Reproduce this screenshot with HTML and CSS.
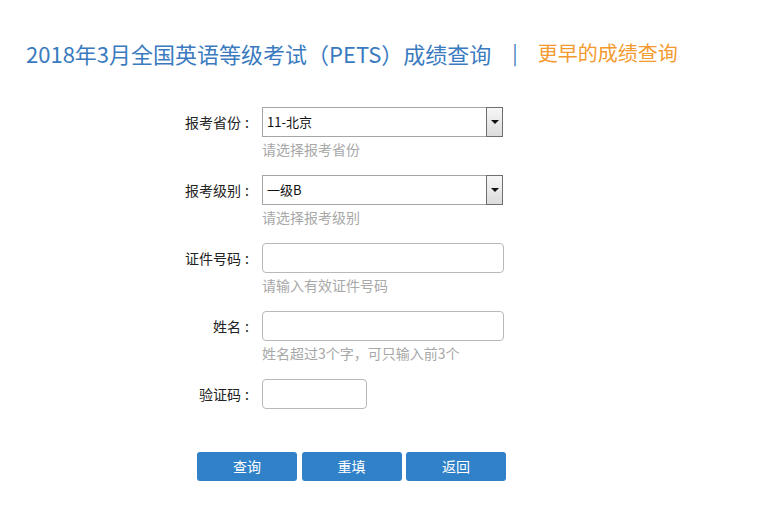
FILE: index.html
```html
<!DOCTYPE html>
<html lang="zh-CN">
<head>
<meta charset="utf-8">
<title>PETS成绩查询</title>
<link rel="stylesheet" href="styles.css">
</head>
<body>
<div class="header">
  <span class="title">2018年3月全国英语等级考试（PETS）成绩查询</span>
  <span class="sep">|</span>
  <a class="earlier">更早的成绩查询</a>
</div>
<div class="form">
  <div class="row">
    <label class="label">报考省份<span class="colon">:</span></label>
    <div class="field">
      <div class="select"><span class="value">11-北京</span><span class="arrow"><span class="tri"></span></span></div>
      <div class="hint">请选择报考省份</div>
    </div>
  </div>
  <div class="row">
    <label class="label">报考级别<span class="colon">:</span></label>
    <div class="field">
      <div class="select"><span class="value">一级B</span><span class="arrow"><span class="tri"></span></span></div>
      <div class="hint">请选择报考级别</div>
    </div>
  </div>
  <div class="row">
    <label class="label">证件号码<span class="colon">:</span></label>
    <div class="field">
      <div class="input"></div>
      <div class="hint">请输入有效证件号码</div>
    </div>
  </div>
  <div class="row">
    <label class="label">姓名<span class="colon">:</span></label>
    <div class="field">
      <div class="input"></div>
      <div class="hint">姓名超过3个字，可只输入前3个</div>
    </div>
  </div>
  <div class="row last">
    <label class="label">验证码<span class="colon">:</span></label>
    <div class="field">
      <div class="input short"></div>
    </div>
  </div>
  <div class="buttons">
    <span class="btn">查询</span>
    <span class="btn">重填</span>
    <span class="btn">返回</span>
  </div>
</div>
</body>
</html>
```
FILE: styles.css
```css
html, body {
  margin: 0;
  padding: 0;
  background: #ffffff;
  font-family: "Noto Sans CJK SC", "Noto Sans", sans-serif;
}
.header {
  display: flex;
  align-items: center;
  height: 30px;
  padding: 38px 0 0 26px;
}
.title {
  font-size: 22px;
  color: #3a7bbf;
  line-height: 30px;
}
.sep {
  font-size: 20px;
  color: #3a7bbf;
  margin: 0 20px 0 21px;
  line-height: 30px;
}
.earlier {
  font-size: 20px;
  color: #f39a2e;
  line-height: 30px;
}
.form {
  margin-top: 39px;
  padding-left: 150px;
}
.row {
  display: flex;
  align-items: flex-start;
  margin-bottom: 16px;
}
.row.last {
  margin-bottom: 43px;
}
.label {
  width: 103px;
  padding-right: 9px;
  text-align: right;
  font-size: 14px;
  line-height: 30px;
  color: #222;
}
.colon {
  display: inline-block;
  width: 12px;
  text-align: center;
}
.field {
  display: flex;
  flex-direction: column;
}
.select {
  box-sizing: border-box;
  width: 241px;
  height: 30px;
  border: 1px solid #a5a5a5;
  display: flex;
  align-items: stretch;
  background: #fff;
}
.value {
  flex: 1;
  font-size: 13px;
  line-height: 28px;
  padding-left: 4px;
  color: #111;
}
.arrow {
  box-sizing: border-box;
  width: 17px;
  border: 1px solid #6f6f6f;
  margin: -1px -1px -1px 0;
  background: linear-gradient(#f6f6f6, #dcdcdc);
  display: flex;
  align-items: center;
  justify-content: center;
}
.tri {
  width: 0;
  height: 0;
  border-left: 4px solid transparent;
  border-right: 4px solid transparent;
  border-top: 4px solid #111;
}
.input {
  box-sizing: border-box;
  width: 242px;
  height: 30px;
  border: 1px solid #b8b8b8;
  border-radius: 4px;
}
.input.short {
  width: 105px;
}
.hint {
  margin-top: 2px;
  font-size: 14px;
  line-height: 20px;
  color: #a8a8a8;
}
.buttons {
  display: flex;
  gap: 4.5px;
  padding-left: 47px;
}
.btn {
  width: 100px;
  height: 29px;
  line-height: 29px;
  text-align: center;
  background: #3081c8;
  color: #fff;
  font-size: 14px;
  border-radius: 3px;
}
```
